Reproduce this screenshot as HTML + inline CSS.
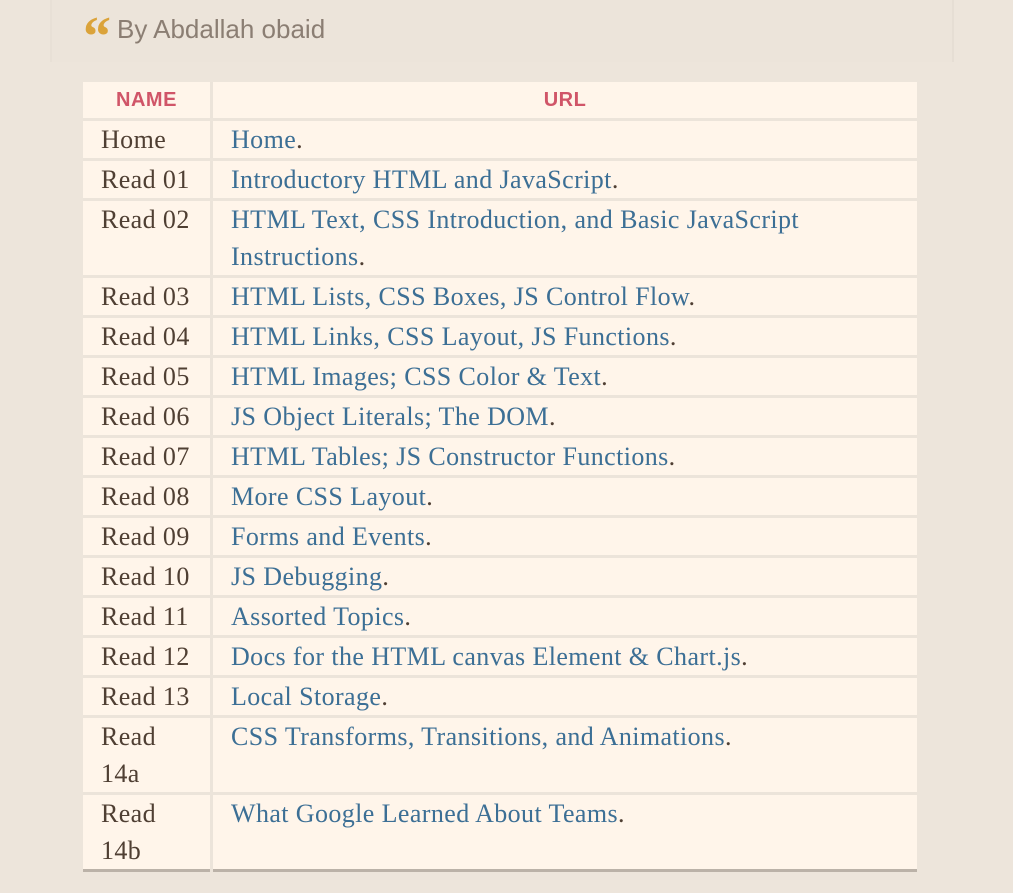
<!DOCTYPE html>
<html><head><style>
html,body{margin:0;padding:0;background:#ede5db;width:1013px;height:893px;overflow:hidden}
.panel{position:absolute;left:50px;top:0;width:900px;height:62px;background:#ece4da;border-right:2px solid #e6ded4;border-left:2px solid #e8e0d6}
.by{position:absolute;left:83px;top:14px;font-family:"Liberation Sans",sans-serif;font-size:26px;color:#8b7e73}
.by .q{color:#dba33a;font-family:"Liberation Serif",serif;font-size:56px;font-weight:bold;position:relative;top:17px;line-height:0;letter-spacing:-4px;margin-right:10px}
table{position:absolute;left:83px;top:82px;border-collapse:collapse;width:834px;border-bottom:3px solid #bbb2a8}
td,th{background:#fff5ea;border:3px solid #ece4da;text-align:left;vertical-align:top}
tr:first-child th{border-top:none}
td:first-child,th:first-child{border-left:none;width:91px}
td:last-child,th:last-child{border-right:none}
tr:last-child td{border-bottom:none}
th{font-family:"Liberation Sans",sans-serif;font-weight:bold;color:#d05568;font-size:20px;letter-spacing:0.5px;text-align:center;height:36px;line-height:36px;padding:0}
td{font-family:"Liberation Serif",serif;font-size:26px;letter-spacing:0.4px;line-height:37px;padding:0 18px;color:#4f3f33}
td:last-child{color:#3c6f95}
td:last-child span{color:#4f3f33}
</style></head><body>
<div class="panel"></div>
<div class="by"><span class="q">“</span>By Abdallah obaid</div>
<table>
<tr><th>NAME</th><th>URL</th></tr>
<tr><td>Home</td><td>Home<span>.</span></td></tr>
<tr><td>Read 01</td><td>Introductory HTML and JavaScript<span>.</span></td></tr>
<tr><td>Read 02</td><td>HTML Text, CSS Introduction, and Basic JavaScript<br>Instructions<span>.</span></td></tr>
<tr><td>Read 03</td><td>HTML Lists, CSS Boxes, JS Control Flow<span>.</span></td></tr>
<tr><td>Read 04</td><td>HTML Links, CSS Layout, JS Functions<span>.</span></td></tr>
<tr><td>Read 05</td><td>HTML Images; CSS Color &amp; Text<span>.</span></td></tr>
<tr><td>Read 06</td><td>JS Object Literals; The DOM<span>.</span></td></tr>
<tr><td>Read 07</td><td>HTML Tables; JS Constructor Functions<span>.</span></td></tr>
<tr><td>Read 08</td><td>More CSS Layout<span>.</span></td></tr>
<tr><td>Read 09</td><td>Forms and Events<span>.</span></td></tr>
<tr><td>Read 10</td><td>JS Debugging<span>.</span></td></tr>
<tr><td>Read 11</td><td>Assorted Topics<span>.</span></td></tr>
<tr><td>Read 12</td><td>Docs for the HTML canvas Element &amp; Chart.js<span>.</span></td></tr>
<tr><td>Read 13</td><td>Local Storage<span>.</span></td></tr>
<tr><td>Read<br>14a</td><td>CSS Transforms, Transitions, and Animations<span>.</span></td></tr>
<tr><td>Read<br>14b</td><td>What Google Learned About Teams<span>.</span></td></tr>
</table>
</body></html>
